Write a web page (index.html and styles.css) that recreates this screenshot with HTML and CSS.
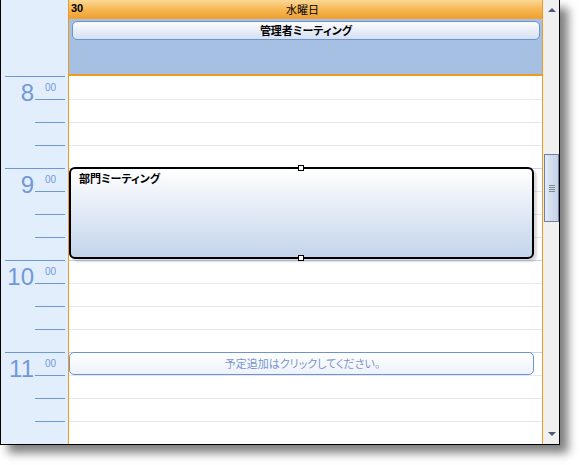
FILE: index.html
```html
<!DOCTYPE html>
<html lang="ja">
<head>
<meta charset="utf-8">
<link rel="stylesheet" href="styles.css">
</head>
<body>
<div class="window">
  <div class="timecol">
    <div class="tc-head"></div>
    <div class="hour">
      <div class="q q-hour"><span class="hnum">8</span><span class="hmin">00</span></div>
      <div class="q"></div><div class="q"></div><div class="q"></div>
    </div>
    <div class="hour">
      <div class="q q-hour"><span class="hnum">9</span><span class="hmin">00</span></div>
      <div class="q"></div><div class="q"></div><div class="q"></div>
    </div>
    <div class="hour">
      <div class="q q-hour"><span class="hnum">10</span><span class="hmin">00</span></div>
      <div class="q"></div><div class="q"></div><div class="q"></div>
    </div>
    <div class="hour">
      <div class="q q-hour"><span class="hnum">11</span><span class="hmin">00</span></div>
      <div class="q"></div><div class="q"></div><div class="q"></div>
    </div>
  </div>
  <div class="daycol">
    <div class="dc-head">
      <span class="dnum">30</span>
      <span class="dname">水曜日</span>
    </div>
    <div class="allday">
      <div class="ad-event">管理者ミーティング</div>
    </div>
    <div class="slots">
      <div class="slot hr first"></div><div class="slot"></div><div class="slot"></div><div class="slot"></div>
      <div class="slot hr"></div><div class="slot"></div><div class="slot"></div><div class="slot"></div>
      <div class="slot hr"></div><div class="slot"></div><div class="slot"></div><div class="slot"></div>
      <div class="slot hr"></div><div class="slot"></div><div class="slot"></div><div class="slot"></div>
      <div class="event">
        <span class="ev-title">部門ミーティング</span>
        <span class="handle h-top"></span>
        <span class="handle h-bottom"></span>
      </div>
      <div class="newappt">予定追加はクリックしてください。</div>
    </div>
  </div>
  <div class="scrollbar">
    <div class="sb-btn"><span class="arr-up"></span></div>
    <div class="sb-track">
      <div class="thumb"><span class="grip"></span></div>
    </div>
    <div class="sb-btn"><span class="arr-down"></span></div>
  </div>
</div>
</body>
</html>
```

FILE: styles.css
```css
* { box-sizing: border-box; }
html, body { margin: 0; padding: 0; background: #ffffff; }
body {
  width: 580px;
  height: 465px;
  overflow: hidden;
  font-family: "Noto Sans CJK JP", "Liberation Sans", sans-serif;
  font-feature-settings: "palt";
}
.window {
  width: 560px;
  height: 445px;
  display: flex;
  border-left: 1px solid #000;
  border-right: 1px solid #000;
  border-bottom: 1px solid #000;
  box-shadow: 8px 8px 9px rgba(0,0,0,0.5);
  background: #fff;
  overflow: hidden;
}

/* time column */
.timecol {
  width: 67px;
  flex: none;
  background: #e3eefd;
  overflow: hidden;
}
.tc-head { height: 76px; }
.hour { height: 92px; }
.q {
  height: 23px;
  margin-left: 34px;
  margin-right: 3px;
  border-top: 1px solid #6f98d8;
}
.q-hour {
  margin-left: 4px;
  display: flex;
  align-items: flex-start;
}
.hnum {
  width: 29px;
  text-align: right;
  font-family: "Liberation Sans", sans-serif;
  font-size: 24px;
  line-height: 24px;
  padding-top: 4px;
  color: #7199d8;
}
.hmin {
  margin-left: 11px;
  font-family: "Liberation Sans", sans-serif;
  font-size: 10px;
  line-height: 10px;
  padding-top: 6px;
  color: #7199d8;
}

/* day column */
.daycol {
  width: 475px;
  flex: none;
  border-left: 1px solid #f09a1e;
  border-right: 1px solid #f09a1e;
  display: flex;
  flex-direction: column;
}
.dc-head {
  height: 19px;
  flex: none;
  position: relative;
  display: flex;
  align-items: center;
  justify-content: center;
  background: linear-gradient(#fcd897 0%, #f7bb5c 45%, #f0a02e 100%);
  border-bottom: 1px solid #f2a33a;
}
.dnum {
  position: absolute;
  left: 2px;
  top: 0;
  font-family: "Liberation Sans", sans-serif;
  font-weight: bold;
  font-size: 11px;
  line-height: 17px;
  color: #000;
}
.dname {
  font-size: 11px;
  line-height: 17px;
  color: #000;
  margin-left: -6px;
}
.allday {
  height: 57px;
  flex: none;
  background: #a5c0e2;
  border-bottom: 2px solid #f09a1e;
  padding: 2px 0 0 3px;
}
.ad-event {
  width: 468px;
  height: 19px;
  border: 1px solid #6d93ce;
  border-radius: 5px;
  background: linear-gradient(#fbfcfe, #d5e0f1);
  text-align: center;
  font-size: 11px;
  font-weight: bold;
  line-height: 16px;
  color: #000;
}
.slots {
  flex: 1;
  position: relative;
  overflow: hidden;
}
.slot {
  height: 23px;
  border-top: 1px solid #e6e7ef;
}
.slot.hr { border-top-color: #c3d4ee; }
.slot.first { border-top-color: #ffffff; }

.event {
  position: absolute;
  left: 0;
  top: 91px;
  width: 465px;
  height: 92px;
  border: 2px solid #000;
  border-radius: 6px;
  background: linear-gradient(#ffffff, #c3d4eb);
  box-shadow: 3px 3px 2px rgba(0,0,0,0.14);
  padding: 3px 0 0 8px;
}
.ev-title {
  display: block;
  font-size: 11px;
  font-weight: bold;
  line-height: 13px;
  color: #000;
}
.handle {
  position: absolute;
  left: 227px;
  width: 6px;
  height: 6px;
  background: #fff;
  border: 1px solid #000;
}
.h-top { top: -4px; }
.h-bottom { bottom: -4px; }

.newappt {
  position: absolute;
  left: 0;
  top: 276px;
  width: 465px;
  height: 23px;
  border: 1px solid #6c93d2;
  border-radius: 5px;
  background: linear-gradient(#ffffff, #edf2fa);
  text-align: center;
  font-size: 11px;
  line-height: 21px;
  color: #7795cc;
  padding-left: 2px;
}

/* scrollbar */
.scrollbar {
  width: 16px;
  flex: none;
  background: #f0f0f0;
  display: flex;
  flex-direction: column;
}
.sb-btn {
  height: 20px;
  flex: none;
  display: flex;
  align-items: center;
  justify-content: center;
  padding-left: 2px;
}
.arr-up {
  width: 0; height: 0;
  border-left: 4px solid transparent;
  border-right: 4px solid transparent;
  border-bottom: 4px solid #4d5878;
}
.arr-down {
  width: 0; height: 0;
  border-left: 4px solid transparent;
  border-right: 4px solid transparent;
  border-top: 4px solid #4d5878;
}
.sb-track {
  flex: 1;
  padding: 134px 0 0 1px;
}
.thumb {
  width: 15px;
  height: 68px;
  border: 1px solid #6f7fa8;
  background: linear-gradient(90deg, #e4ebf5 0%, #d3deee 40%, #c6d3e7 100%);
  display: flex;
  align-items: center;
  justify-content: center;
}
.grip {
  width: 6px;
  height: 7px;
  background: repeating-linear-gradient(#808890 0 1px, transparent 1px 2px);
}
```
